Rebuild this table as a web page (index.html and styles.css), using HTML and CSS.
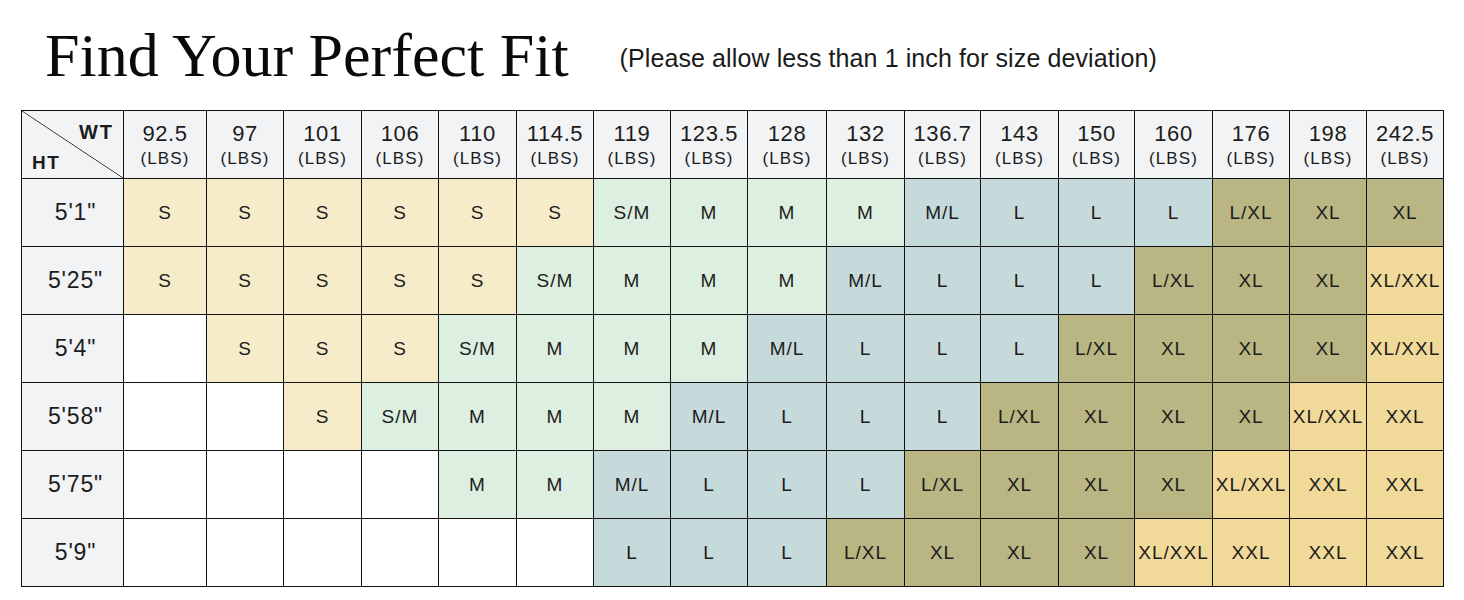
FILE: index.html
```html
<!DOCTYPE html>
<html lang="en">
<head>
<meta charset="utf-8">
<title>Find Your Perfect Fit</title>
<link rel="stylesheet" href="styles.css">
</head>
<body>
<header class="head">
  <h1 class="title">Find Your Perfect Fit</h1>
  <p class="note">(Please allow less than 1 inch for size deviation)</p>
</header>
<div class="chart">
  <div class="corner"><span class="wt">WT</span><span class="ht">HT</span></div>
  <div class="wh"><span class="num">92.5</span><span class="unit">(LBS)</span></div>
  <div class="wh"><span class="num">97</span><span class="unit">(LBS)</span></div>
  <div class="wh"><span class="num">101</span><span class="unit">(LBS)</span></div>
  <div class="wh"><span class="num">106</span><span class="unit">(LBS)</span></div>
  <div class="wh"><span class="num">110</span><span class="unit">(LBS)</span></div>
  <div class="wh"><span class="num">114.5</span><span class="unit">(LBS)</span></div>
  <div class="wh"><span class="num">119</span><span class="unit">(LBS)</span></div>
  <div class="wh"><span class="num">123.5</span><span class="unit">(LBS)</span></div>
  <div class="wh"><span class="num">128</span><span class="unit">(LBS)</span></div>
  <div class="wh"><span class="num">132</span><span class="unit">(LBS)</span></div>
  <div class="wh"><span class="num">136.7</span><span class="unit">(LBS)</span></div>
  <div class="wh"><span class="num">143</span><span class="unit">(LBS)</span></div>
  <div class="wh"><span class="num">150</span><span class="unit">(LBS)</span></div>
  <div class="wh"><span class="num">160</span><span class="unit">(LBS)</span></div>
  <div class="wh"><span class="num">176</span><span class="unit">(LBS)</span></div>
  <div class="wh"><span class="num">198</span><span class="unit">(LBS)</span></div>
  <div class="wh"><span class="num">242.5</span><span class="unit">(LBS)</span></div>

  <div class="rh">5'1"</div>
  <div class="c s">S</div><div class="c s">S</div><div class="c s">S</div><div class="c s">S</div><div class="c s">S</div><div class="c s">S</div>
  <div class="c m">S/M</div><div class="c m">M</div><div class="c m">M</div><div class="c m">M</div>
  <div class="c l">M/L</div><div class="c l">L</div><div class="c l">L</div><div class="c l">L</div>
  <div class="c xl">L/XL</div><div class="c xl">XL</div><div class="c xl">XL</div>

  <div class="rh">5'25"</div>
  <div class="c s">S</div><div class="c s">S</div><div class="c s">S</div><div class="c s">S</div><div class="c s">S</div>
  <div class="c m">S/M</div><div class="c m">M</div><div class="c m">M</div><div class="c m">M</div>
  <div class="c l">M/L</div><div class="c l">L</div><div class="c l">L</div><div class="c l">L</div>
  <div class="c xl">L/XL</div><div class="c xl">XL</div><div class="c xl">XL</div>
  <div class="c xxl">XL/XXL</div>

  <div class="rh">5'4"</div>
  <div class="c"></div>
  <div class="c s">S</div><div class="c s">S</div><div class="c s">S</div>
  <div class="c m">S/M</div><div class="c m">M</div><div class="c m">M</div><div class="c m">M</div>
  <div class="c l">M/L</div><div class="c l">L</div><div class="c l">L</div><div class="c l">L</div>
  <div class="c xl">L/XL</div><div class="c xl">XL</div><div class="c xl">XL</div><div class="c xl">XL</div>
  <div class="c xxl">XL/XXL</div>

  <div class="rh">5'58"</div>
  <div class="c"></div><div class="c"></div>
  <div class="c s">S</div>
  <div class="c m">S/M</div><div class="c m">M</div><div class="c m">M</div><div class="c m">M</div>
  <div class="c l">M/L</div><div class="c l">L</div><div class="c l">L</div><div class="c l">L</div>
  <div class="c xl">L/XL</div><div class="c xl">XL</div><div class="c xl">XL</div><div class="c xl">XL</div>
  <div class="c xxl">XL/XXL</div><div class="c xxl">XXL</div>

  <div class="rh">5'75"</div>
  <div class="c"></div><div class="c"></div><div class="c"></div><div class="c"></div>
  <div class="c m">M</div><div class="c m">M</div>
  <div class="c l">M/L</div><div class="c l">L</div><div class="c l">L</div><div class="c l">L</div>
  <div class="c xl">L/XL</div><div class="c xl">XL</div><div class="c xl">XL</div><div class="c xl">XL</div>
  <div class="c xxl">XL/XXL</div><div class="c xxl">XXL</div><div class="c xxl">XXL</div>

  <div class="rh">5'9"</div>
  <div class="c"></div><div class="c"></div><div class="c"></div><div class="c"></div><div class="c"></div><div class="c"></div>
  <div class="c l">L</div><div class="c l">L</div><div class="c l">L</div>
  <div class="c xl">L/XL</div><div class="c xl">XL</div><div class="c xl">XL</div><div class="c xl">XL</div>
  <div class="c xxl">XL/XXL</div><div class="c xxl">XXL</div><div class="c xxl">XXL</div><div class="c xxl">XXL</div>
</div>
</body>
</html>
```

FILE: styles.css
```css
* { box-sizing: border-box; }

html, body {
  margin: 0;
  padding: 0;
  background: #ffffff;
}

body {
  font-family: "Liberation Sans", Arial, sans-serif;
  color: #1c1c1c;
}

.head {
  height: 110px;
  display: flex;
  align-items: flex-start;
  padding: 24px 0 0 45px;
}

.title {
  margin: 0;
  font-family: "Liberation Serif", "Times New Roman", serif;
  font-weight: 400;
  font-size: 62px;
  line-height: 1;
  color: #0a0a0a;
  letter-spacing: 0;
}

.note {
  margin: 19px 0 0 51px;
  font-size: 25px;
  line-height: 30px;
  color: #1a1a1a;
  letter-spacing: 0.1px;
}

.chart {
  display: grid;
  grid-template-columns: 102px 83px 77px 78px 77px 78px 77px 77px 77px 79px 78px 76px 78px 76px 78px 77px 77px 77px;
  grid-auto-rows: 68px;
  margin-left: 21px;
  width: max-content;
  border-top: 1px solid #111;
  border-left: 1px solid #111;
}

.chart > div {
  border-right: 1px solid #111;
  border-bottom: 1px solid #111;
}

.corner {
  position: relative;
  background-color: #f2f3f5;
  background-image: linear-gradient(to top right, transparent calc(50% - 0.7px), #222 50%, transparent calc(50% + 0.7px));
  font-weight: 700;
  font-size: 19px;
  letter-spacing: 1.5px;
}

.wt {
  position: absolute;
  right: 9px;
  top: 10px;
  font-size: 20px;
  letter-spacing: 2px;
}

.ht {
  position: absolute;
  left: 10px;
  bottom: 4px;
}

.wh {
  background: #f2f3f5;
  display: flex;
  flex-direction: column;
  align-items: center;
  justify-content: center;
  padding-top: 2px;
}

.num {
  font-size: 22px;
  line-height: 27px;
  letter-spacing: 0.6px;
}

.unit {
  font-size: 17px;
  line-height: 24px;
  letter-spacing: 1.1px;
}

.rh {
  background: #f2f3f5;
  display: flex;
  align-items: center;
  justify-content: center;
  font-size: 23px;
  letter-spacing: 0.8px;
  padding-left: 6px;
}

.c {
  display: flex;
  align-items: center;
  justify-content: center;
  font-size: 19px;
  letter-spacing: 1px;
  background: #ffffff;
}

.c.s { background: #f6ecca; }
.c.m { background: #dcefe1; }
.c.l { background: #c6d9db; }
.c.xl { background: #b9b684; }
.c.xxl { background: #f1d99a; }
```
